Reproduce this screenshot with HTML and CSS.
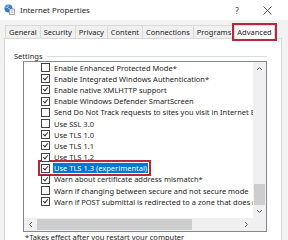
FILE: index.html
```html
<!DOCTYPE html>
<html>
<head>
<title>Internet Properties</title>
<link rel="stylesheet" href="styles.css">
</head>
<body>
<div class="window">
  <div class="titlebar">
    <svg class="app-icon" width="11" height="11" viewBox="0 0 11 11">
      <circle cx="4.5" cy="4.5" r="4" fill="#2f7fc6"/>
      <path d="M1.5 3.2c1.2-.4 2.1.4 2.8 1.1.6.6 1.5.4 2-.3M4 1c.3 1 .1 2-.6 2.6" stroke="#bfe3f7" stroke-width="1" fill="none"/>
      <rect x="5.5" y="5" width="5" height="5.5" fill="#fff" stroke="#8a8a8a" stroke-width=".8"/>
      <path d="M6.7 6.8h2.6M6.7 8.2h2.6" stroke="#9a9a9a" stroke-width=".7"/>
    </svg>
    <span class="title">Internet Properties</span>
    <span class="caption-btn help">?</span>
    <span class="caption-btn close">
      <svg width="9" height="9" viewBox="0 0 9 9"><path d="M.5 .5l8 8M8.5 .5l-8 8" stroke="#333" stroke-width=".8"/></svg>
    </span>
  </div>

  <div class="tabs">
    <span class="tab">General</span>
    <span class="tab">Security</span>
    <span class="tab">Privacy</span>
    <span class="tab">Content</span>
    <span class="tab">Connections</span>
    <span class="tab">Programs</span>
    <span class="tab active marked">Advanced</span>
  </div>

  <div class="page">
    <div class="group-label"><span>Settings</span><span class="rule"></span></div>

    <div class="listbox">
      <div class="list-main">
        <div class="rows">
          <div class="row"><span class="cb"></span><span class="label">Enable Enhanced Protected Mode*</span></div>
          <div class="row"><span class="cb on"></span><span class="label">Enable Integrated Windows Authentication*</span></div>
          <div class="row"><span class="cb on"></span><span class="label">Enable native XMLHTTP support</span></div>
          <div class="row"><span class="cb on"></span><span class="label">Enable Windows Defender SmartScreen</span></div>
          <div class="row"><span class="cb"></span><span class="label">Send Do Not Track requests to sites you visit in Internet Explorer*</span></div>
          <div class="row"><span class="cb"></span><span class="label">Use SSL 3.0</span></div>
          <div class="row"><span class="cb on"></span><span class="label">Use TLS 1.0</span></div>
          <div class="row"><span class="cb on"></span><span class="label">Use TLS 1.1</span></div>
          <div class="row"><span class="cb on"></span><span class="label">Use TLS 1.2</span></div>
          <div class="row"><span class="marked pick"><span class="cb on"></span><span class="label selected">Use TLS 1.3 (experimental)</span></span></div>
          <div class="row"><span class="cb on"></span><span class="label">Warn about certificate address mismatch*</span></div>
          <div class="row"><span class="cb"></span><span class="label">Warn if changing between secure and not secure mode</span></div>
          <div class="row"><span class="cb on"></span><span class="label">Warn if POST submittal is redirected to a zone that does not permit posts</span></div>
        </div>
        <div class="vscroll">
          <span class="arrow"><svg width="7" height="5" viewBox="0 0 7 5"><path d="M1 4l2.5-2.5L6 4" stroke="#606060" fill="none"/></svg></span>
          <span class="track"></span>
          <span class="thumb"></span>
          <span class="arrow"><svg width="7" height="5" viewBox="0 0 7 5"><path d="M1 1l2.5 2.5L6 1" stroke="#606060" fill="none"/></svg></span>
        </div>
      </div>
      <div class="hscroll-row">
        <div class="hscroll">
          <span class="arrow"><svg width="5" height="7" viewBox="0 0 5 7"><path d="M4 1L1.5 3.5 4 6" stroke="#606060" fill="none"/></svg></span>
          <span class="hthumb"></span>
          <span class="htrack"></span>
          <span class="arrow"><svg width="5" height="7" viewBox="0 0 5 7"><path d="M1 1l2.5 2.5L1 6" stroke="#606060" fill="none"/></svg></span>
        </div>
        <div class="corner"></div>
      </div>
    </div>

    <p class="note">*Takes effect after you restart your computer</p>
  </div>
</div>
</body>
</html>
```

FILE: styles.css
```css
/* Dialog frame */
html,
body {
  margin: 0;
  background: #f2f2f2;
}

body {
  font-family: 'Noto Sans', 'Liberation Sans', sans-serif;
  font-size: 7.5px;
  color: #1e1e1e;
}

.window {
  width: 288px;
  height: 240px;
  overflow: hidden;
  display: flex;
  flex-direction: column;
}

/* Title bar */
.titlebar {
  height: 20px;
  flex: none;
  background: #fff;
  display: flex;
  align-items: center;
  padding-left: 4px;
}

.app-icon {
  margin-top: -2px;
}

.title {
  margin-left: 5px;
  font-size: 7.8px;
}

.caption-btn {
  width: 30px;
  height: 20px;
  display: flex;
  align-items: center;
  justify-content: center;
  font-size: 8px;
  color: #333;
}

.help {
  margin-left: auto;
}

.close {
  margin-right: 6px;
}

/* Tabs */
.tabs {
  display: flex;
  align-items: flex-end;
  height: 19px;
  flex: none;
  padding-left: 5px;
}

.tab {
  height: 12px;
  line-height: 12px;
  padding: 0 3px;
  border: 1px solid #d9d9d9;
  border-bottom: 0;
  margin-right: -1px;
  background: #f0f0f0;
  margin-bottom: 1px;
}

.tab.active {
  background: #fff;
  height: 13px;
  margin-bottom: 0;
  padding: 0 2px;
  position: relative;
  z-index: 1;
}

.marked {
  outline: 2px solid #b8273a;
}

/* Page */
.page {
  flex: 1;
  background: #fff;
  border: 1px solid #d9d9d9;
  border-bottom: 0;
  margin: -1px 6px 0 4px;
  padding: 12px 14px 0 18px;
}

.group-label {
  display: flex;
  align-items: center;
  margin-left: -9px;
  height: 10px;
}

.rule {
  flex: 1;
  height: 1px;
  background: #dcdcdc;
  margin: 1px 0 0 4px;
}

/* List box */
.listbox {
  border: 1px solid #828790;
  height: 169px;
  display: flex;
  flex-direction: column;
}

.list-main {
  flex: 1;
  display: flex;
  min-height: 0;
}

.rows {
  flex: 1;
  overflow: hidden;
  min-width: 0;
}

.row {
  height: 11.2px;
  display: flex;
  align-items: center;
  padding-left: 17px;
  white-space: nowrap;
}

.pick {
  display: inline-flex;
  align-items: center;
  outline-offset: 1px;
}

.cb {
  width: 7px;
  height: 7px;
  border: 1px solid #444;
  background: #fff;
  flex: none;
  position: relative;
}

.cb.on::after {
  content: '';
  position: absolute;
  left: 2px;
  top: 0;
  width: 2px;
  height: 4px;
  border: solid #333;
  border-width: 0 1px 1px 0;
  transform: rotate(40deg);
}

.label {
  margin-left: 3px;
  padding: 0 1px;
  line-height: 10px;
}

.selected {
  background: #0078d7;
  color: #fff;
}

.vscroll {
  width: 13px;
  flex: none;
  background: #f0f0f0;
  display: flex;
  flex-direction: column;
}

.arrow {
  height: 13px;
  flex: none;
  display: flex;
  align-items: center;
  justify-content: center;
}

.track {
  flex: 1;
}

.thumb {
  height: 21px;
  margin: 0 1px;
  background: #cdcdcd;
}

.hscroll-row {
  display: flex;
  height: 13px;
  flex: none;
}

.hscroll {
  flex: 1;
  display: flex;
  background: #f0f0f0;
}

.hscroll .arrow {
  width: 13px;
}

.hthumb {
  width: 155px;
  margin: 1px 0;
  background: #cdcdcd;
}

.htrack {
  flex: 1;
}

.corner {
  width: 13px;
  background: #f0f0f0;
}

.note {
  margin: 0 0 0 2px;
  line-height: 10px;
  white-space: nowrap;
}
```
